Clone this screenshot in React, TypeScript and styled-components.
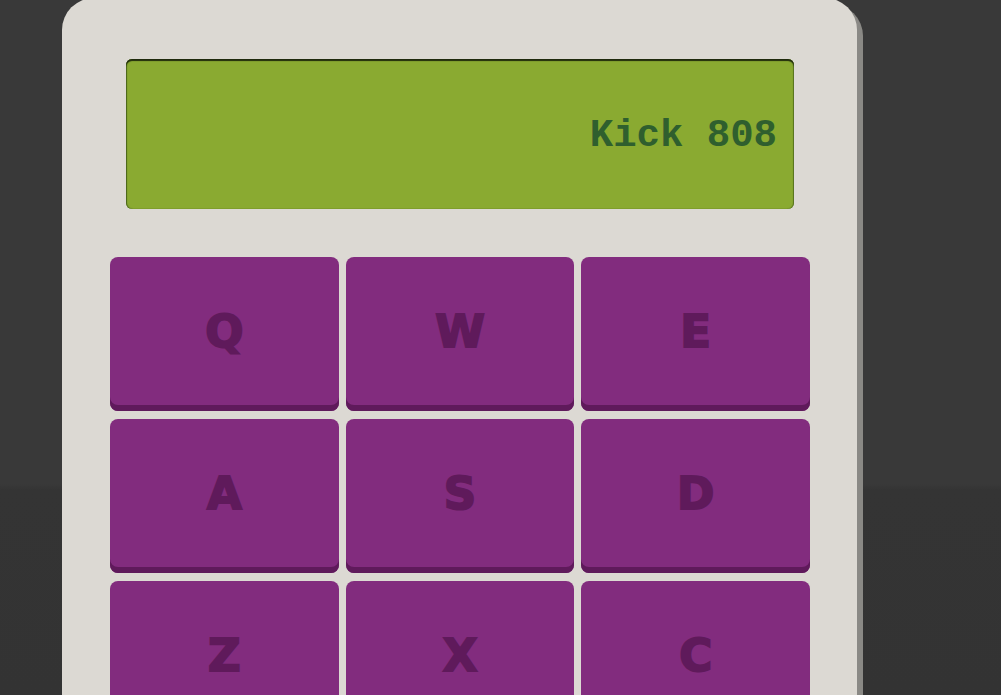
import React, { useState } from 'react';
import styled, { createGlobalStyle } from 'styled-components';

const GlobalStyle = createGlobalStyle`
  html, body {
    margin: 0;
    padding: 0;
    height: 100%;
    overflow: hidden;
  }
  body {
    background: linear-gradient(to bottom, #393939 0, #393939 484px, #343434 490px, #333333 100%);
    font-family: "Liberation Sans", Arial, sans-serif;
  }
`;

const Page = styled.div`
  padding-left: 62px;
`;

const Machine = styled.div`
  width: 795px;
  height: 760px;
  margin-top: -2px;
  box-sizing: border-box;
  padding: 61px 47px 0 48px;
  background: #dcd9d3;
  border-radius: 32px 32px 0 0;
  box-shadow: 6px 6px 0 #8a8985;
  display: flex;
  flex-direction: column;
  gap: 48px;
`;

const Display = styled.div`
  margin: 0 16px;
  height: 150px;
  box-sizing: border-box;
  padding: 0 17px 0 16px;
  background: #8aaa31;
  border-radius: 6px;
  box-shadow: inset 0 2px 1px #1f2a0c, inset 1px 0 1px #4e6a1c, inset -1px 0 1px #5d7a22;
  display: flex;
  align-items: center;
  justify-content: flex-end;
  font-family: "Liberation Mono", "Courier New", monospace;
  font-weight: bold;
  font-size: 39px;
  color: #2f5f2e;
  padding-top: 4px;
`;

const Pads = styled.div`
  display: grid;
  grid-template-columns: repeat(3, 1fr);
  grid-auto-rows: 154px;
  column-gap: 7px;
  row-gap: 8px;
`;

const Pad = styled.button<{ $active: boolean }>`
  border: none;
  margin: 0;
  padding: 0 0 6px;
  border-radius: 8px;
  background: ${({ $active }) => ($active ? '#93369a' : '#822c7e')};
  box-shadow: inset 0 -6px 0 #5f1a5b;
  color: #5f1a5b;
  font-family: "DejaVu Sans", "Liberation Sans", sans-serif;
  font-weight: 900;
  font-size: 45px;
  -webkit-text-stroke: 2px #5f1a5b;
  cursor: pointer;
  display: flex;
  align-items: center;
  justify-content: center;
`;

const pads = [
  { key: 'Q', name: 'Heater 1' },
  { key: 'W', name: 'Heater 2' },
  { key: 'E', name: 'Heater 3' },
  { key: 'A', name: 'Heater 4' },
  { key: 'S', name: 'Clap' },
  { key: 'D', name: 'Open HH' },
  { key: 'Z', name: 'Kick n\' Hat' },
  { key: 'X', name: 'Kick 808' },
  { key: 'C', name: 'Closed HH' },
];

const App = (): JSX.Element => {
  const [display, setDisplay] = useState('Kick 808');

  return (
    <Page>
      <GlobalStyle />
      <Machine>
        <Display>{display}</Display>
        <Pads>
          {pads.map((pad) => (
            <Pad key={pad.key} $active={false} onClick={() => setDisplay(pad.name)}>
              {pad.key}
            </Pad>
          ))}
        </Pads>
      </Machine>
    </Page>
  );
};

export default App;
